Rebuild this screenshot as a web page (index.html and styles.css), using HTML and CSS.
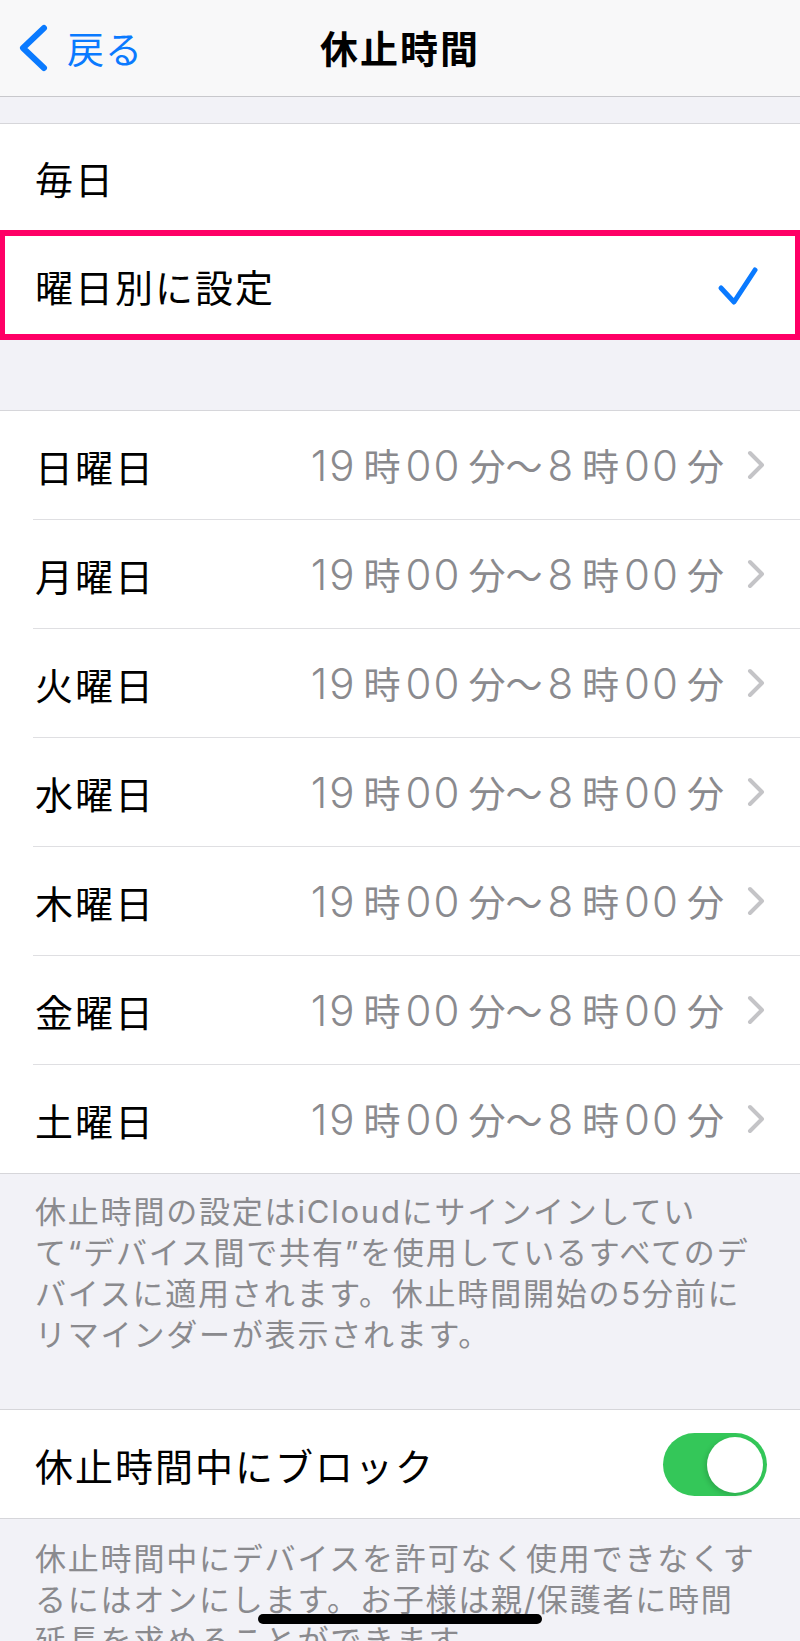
FILE: index.html
```html
<!DOCTYPE html>
<html lang="ja">
<head>
    <meta charset="UTF-8">
    <meta name="viewport" content="width=device-width, initial-scale=1.0">
    <title>休止時間</title>
    <link rel="stylesheet" href="styles.css">
</head>
<body>
    <div class="screen">
        <header class="navbar">
            <a class="back" href="#">
                <svg class="back-icon" width="34" height="52" viewBox="0 0 34 52">
                    <polyline points="28,6 7,26 28,46" fill="none" stroke="#0a7aff" stroke-width="6" stroke-linecap="round" stroke-linejoin="round"/>
                </svg>
                <span>戻る</span>
            </a>
            <h1 class="title">休止時間</h1>
            <div></div>
        </header>

        <ul class="group group-mode">
            <li class="row row-first">毎日</li>
            <li class="row row-selected">
                <span>曜日別に設定</span>
                <svg class="check" width="44" height="44" viewBox="0 0 44 44">
                    <polyline points="5,25 18,39 39,7" fill="none" stroke="#0a7aff" stroke-width="5" stroke-linecap="round" stroke-linejoin="round"/>
                </svg>
            </li>
        </ul>

        <ul class="group group-days">
            <li class="row day"><span>日曜日</span><span class="value"><span class="num">19</span>時<span class="num">00</span>分〜<span class="num">8</span>時<span class="num">00</span>分</span><svg class="chevron" width="20" height="32" viewBox="0 0 20 32"><polyline points="4,4 16,16 4,28" fill="none" stroke="#c4c4c7" stroke-width="4" stroke-linecap="round" stroke-linejoin="round"/></svg></li>
            <li class="row day"><span>月曜日</span><span class="value"><span class="num">19</span>時<span class="num">00</span>分〜<span class="num">8</span>時<span class="num">00</span>分</span><svg class="chevron" width="20" height="32" viewBox="0 0 20 32"><polyline points="4,4 16,16 4,28" fill="none" stroke="#c4c4c7" stroke-width="4" stroke-linecap="round" stroke-linejoin="round"/></svg></li>
            <li class="row day"><span>火曜日</span><span class="value"><span class="num">19</span>時<span class="num">00</span>分〜<span class="num">8</span>時<span class="num">00</span>分</span><svg class="chevron" width="20" height="32" viewBox="0 0 20 32"><polyline points="4,4 16,16 4,28" fill="none" stroke="#c4c4c7" stroke-width="4" stroke-linecap="round" stroke-linejoin="round"/></svg></li>
            <li class="row day"><span>水曜日</span><span class="value"><span class="num">19</span>時<span class="num">00</span>分〜<span class="num">8</span>時<span class="num">00</span>分</span><svg class="chevron" width="20" height="32" viewBox="0 0 20 32"><polyline points="4,4 16,16 4,28" fill="none" stroke="#c4c4c7" stroke-width="4" stroke-linecap="round" stroke-linejoin="round"/></svg></li>
            <li class="row day"><span>木曜日</span><span class="value"><span class="num">19</span>時<span class="num">00</span>分〜<span class="num">8</span>時<span class="num">00</span>分</span><svg class="chevron" width="20" height="32" viewBox="0 0 20 32"><polyline points="4,4 16,16 4,28" fill="none" stroke="#c4c4c7" stroke-width="4" stroke-linecap="round" stroke-linejoin="round"/></svg></li>
            <li class="row day"><span>金曜日</span><span class="value"><span class="num">19</span>時<span class="num">00</span>分〜<span class="num">8</span>時<span class="num">00</span>分</span><svg class="chevron" width="20" height="32" viewBox="0 0 20 32"><polyline points="4,4 16,16 4,28" fill="none" stroke="#c4c4c7" stroke-width="4" stroke-linecap="round" stroke-linejoin="round"/></svg></li>
            <li class="row day"><span>土曜日</span><span class="value"><span class="num">19</span>時<span class="num">00</span>分〜<span class="num">8</span>時<span class="num">00</span>分</span><svg class="chevron" width="20" height="32" viewBox="0 0 20 32"><polyline points="4,4 16,16 4,28" fill="none" stroke="#c4c4c7" stroke-width="4" stroke-linecap="round" stroke-linejoin="round"/></svg></li>
        </ul>

        <p class="footer footer-first">休止時間の設定はiCloudにサインインしてい<br>て“デバイス間で共有”を使用しているすべてのデ<br>バイスに適用されます。休止時間開始の5分前に<br>リマインダーが表示されます。</p>

        <ul class="group group-block">
            <li class="row row-toggle">
                <span>休止時間中にブロック</span>
                <span class="switch"><span class="knob"></span></span>
            </li>
        </ul>

        <p class="footer footer-second">休止時間中にデバイスを許可なく使用できなくす<br>るにはオンにします。お子様は親/保護者に時間<br>延長を求めることができます。</p>

        <div class="home-indicator"></div>
    </div>
</body>
</html>
```

FILE: styles.css
```css
body {
    margin: 0;
    background: #f2f2f7;
    font-family: "Inter", "Noto Sans CJK JP", sans-serif;
    color: #000000;
}
.screen {
    position: relative;
    width: 800px;
    height: 1641px;
    overflow: hidden;
    background: #f2f2f7;
}
.navbar {
    display: grid;
    grid-template-columns: 1fr auto 1fr;
    align-items: center;
    height: 96px;
    padding-left: 16px;
    background: #f8f8f9;
    border-bottom: 1px solid #c8c8cc;
}
.back {
    display: flex;
    align-items: center;
    color: #0a7aff;
    text-decoration: none;
    font-size: 37px;
    letter-spacing: 1px;
}
.back span {
    margin-left: 17px;
}
.back-icon {
    display: block;
}
.title {
    margin: 0 16px 4px 0;
    font-size: 38px;
    font-weight: bold;
    letter-spacing: 2px;
}
.group {
    list-style: none;
    margin: 0;
    padding: 0;
    background: #ffffff;
    border-top: 1px solid #d6d6da;
    border-bottom: 1px solid #d6d6da;
}
.group-mode {
    margin-top: 26px;
}
.group-days {
    margin-top: 70px;
}
.row {
    display: flex;
    align-items: center;
    height: 108px;
    padding: 0 34px 0 35px;
    font-size: 38px;
    letter-spacing: 2px;
    border-bottom: 1px solid #dfdfe2;
    box-sizing: border-box;
}
.row:last-child {
    border-bottom: none;
    height: 108px;
}
.row-first {
    height: 107px;
}
.row-selected {
    justify-content: space-between;
    padding-right: 40px;
    outline: 6px solid #ff0066;
    outline-offset: -5px;
}
.group-days .row {
    height: 109px;
    margin-left: 33px;
    padding-left: 2px;
}
.group-days .row:last-child {
    height: 108px;
}
.day .value {
    margin-left: auto;
    margin-right: 22px;
    color: #8a8a8e;
    font-size: 37px;
    letter-spacing: 0;
}
.num {
    font-size: 42px;
    font-weight: 300;
    letter-spacing: 2px;
    margin: 0 7px 0 5px;
}
.chevron {
    display: block;
}
.footer {
    margin: 0;
    padding: 17px 35px 0;
    color: #8a8a8e;
    font-size: 31px;
    line-height: 41px;
    letter-spacing: 1.8px;
}
.footer-first {
    height: 235px;
    box-sizing: border-box;
}
.row-toggle {
    justify-content: space-between;
    height: 105px;
    padding-right: 33px;
}
.switch {
    position: relative;
    width: 104px;
    height: 63px;
    border-radius: 32px;
    background: #34c759;
}
.knob {
    position: absolute;
    top: 4px;
    right: 4px;
    width: 56px;
    height: 56px;
    border-radius: 50%;
    background: #ffffff;
    box-shadow: -2px 2px 5px rgba(0, 0, 0, 0.15);
}
.footer-second {
    padding-top: 19px;
}
.home-indicator {
    position: absolute;
    left: 258px;
    top: 1614px;
    width: 284px;
    height: 10px;
    border-radius: 5px;
    background: #000000;
}
```
